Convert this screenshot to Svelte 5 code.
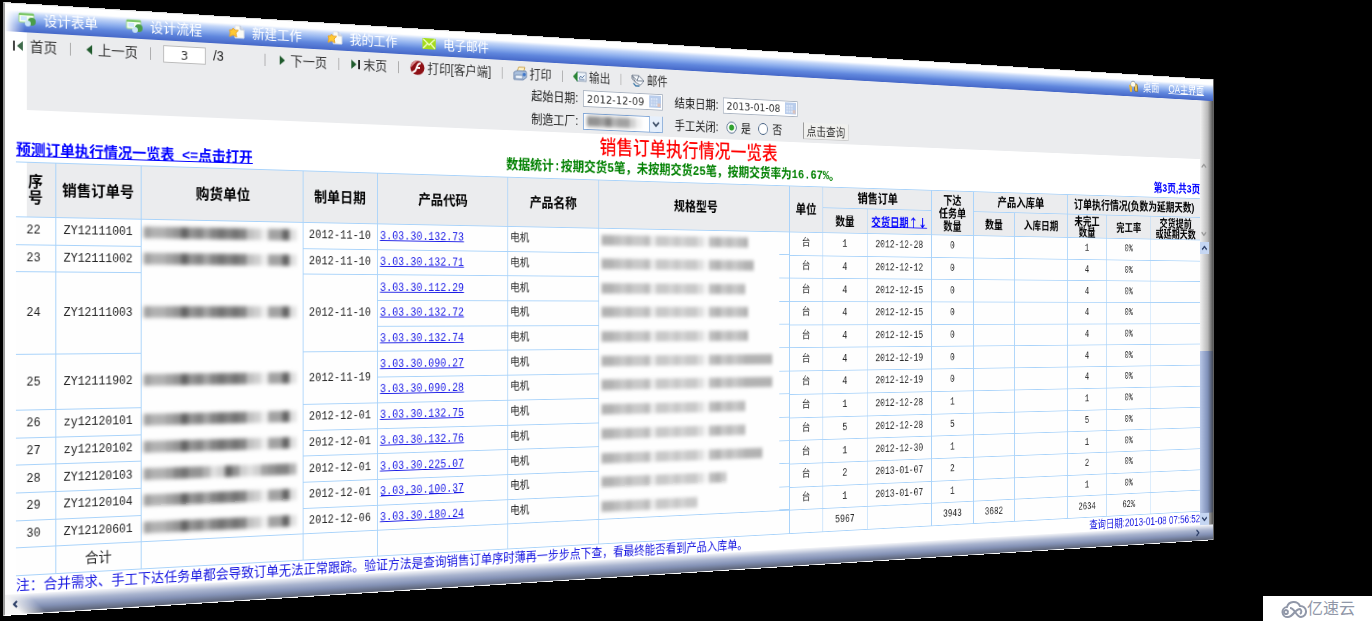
<script lang="ts">
  type Line = { code: string; spec: number; qty: number; due: string; issued: number };
  type Order = { seq: number; no: string; date: string; lines: Line[] };

  const menu = [
    { label: '设计表单', icon: 'form' },
    { label: '设计流程', icon: 'form' },
    { label: '新建工作', icon: 'work' },
    { label: '我的工作', icon: 'work' },
    { label: '电子邮件', icon: 'mail' },
  ];

  const orders: Order[] = [
    { seq: 22, no: 'ZY12111001', date: '2012-11-10', lines: [
      { code: '3.03.30.132.73', spec: 198, qty: 1, due: '2012-12-28', issued: 0 },
    ] },
    { seq: 23, no: 'ZY12111002', date: '2012-11-10', lines: [
      { code: '3.03.30.132.71', spec: 206, qty: 4, due: '2012-12-12', issued: 0 },
    ] },
    { seq: 24, no: 'ZY12111003', date: '2012-11-10', lines: [
      { code: '3.03.30.112.29', spec: 194, qty: 4, due: '2012-12-15', issued: 0 },
      { code: '3.03.30.132.72', spec: 198, qty: 4, due: '2012-12-15', issued: 0 },
      { code: '3.03.30.132.74', spec: 198, qty: 4, due: '2012-12-15', issued: 0 },
    ] },
    { seq: 25, no: 'ZY12111902', date: '2012-11-19', lines: [
      { code: '3.03.30.090.27', spec: 232, qty: 4, due: '2012-12-19', issued: 0 },
      { code: '3.03.30.090.28', spec: 232, qty: 4, due: '2012-12-19', issued: 0 },
    ] },
    { seq: 26, no: 'zy12120101', date: '2012-12-01', lines: [
      { code: '3.03.30.132.75', spec: 194, qty: 1, due: '2012-12-28', issued: 1 },
    ] },
    { seq: 27, no: 'zy12120102', date: '2012-12-01', lines: [
      { code: '3.03.30.132.76', spec: 194, qty: 5, due: '2012-12-28', issued: 5 },
    ] },
    { seq: 28, no: 'ZY12120103', date: '2012-12-01', lines: [
      { code: '3.03.30.225.07', spec: 218, qty: 1, due: '2012-12-30', issued: 1 },
    ] },
    { seq: 29, no: 'ZY12120104', date: '2012-12-01', lines: [
      { code: '3.03.30.100.37', spec: 168, qty: 2, due: '2013-01-07', issued: 2 },
    ] },
    { seq: 30, no: 'ZY12120601', date: '2012-12-06', lines: [
      { code: '3.03.30.180.24', spec: 128, qty: 1, due: '2013-01-07', issued: 1 },
    ] },
  ];

  // ink density of the hidden texts, one number per 8px
  const buyerInk = [6, 5, 5, 6, 7, 10, 7, 8, 6, 8, 9, 8, 9, 8, 4, 3, 1, 6, 6, 10, 2];
  const buyerInkAlt = [6, 5, 5, 6, 8, 9, 7, 7, 5, 2, 3, 10, 7, 3, 2, 3, 6, 7, 8, 8, 5];
  const specInk = [7, 7, 6, 5, 6, 5, 5, 6, 2, 5, 5, 4, 5, 4, 5, 5, 3, 1, 6, 7, 5, 6, 5, 6, 7, 7, 7, 7, 7];

  let page = $state('3');
  let from = $state('2012-12-09');
  let to = $state('2013-01-08');
  let closed = $state('yes');
</script>

{#snippet ink(values: number[], width: number)}
  <svg class="ink" {width} height="14" aria-hidden="true">
    {#each values as v, i}
      <rect x={i * 8} y="0" width="8" height="12" fill="#555" opacity={v / 11} />
    {/each}
  </svg>
{/snippet}

{#snippet calendar()}
  <svg class="cal" width="16" height="14" viewBox="0 0 16 14" aria-hidden="true">
    <rect width="16" height="14" fill="#b9cdec" />
    <rect x="2" y="3" width="9" height="9" fill="#dbe6f7" />
    <path d="M2 6h9M2 9h9M5 3v9M8 3v9" stroke="#b3c7e8" />
    <rect x="11" y="9" width="4" height="4" fill="#dcc3bd" />
  </svg>
{/snippet}

{#snippet menuIcon(kind: string)}
  <svg width="18" height="16" viewBox="0 0 18 16" aria-hidden="true">
    {#if kind === 'form'}
      <rect x="1" y="2" width="15" height="9" rx="1" fill="#f4fff0" stroke="#9bd68a" />
      <path d="M1 3h15" stroke="#7cc768" stroke-width="2" />
      <rect x="3" y="5" width="6" height="4" fill="#cfe6ff" />
      <circle cx="14" cy="10" r="4" fill="#4a9e49" />
      <circle cx="10" cy="12" r="3" fill="#c9e4f7" />
    {:else if kind === 'work'}
      <path d="M7 1h6l4 4v9H7z" fill="#fbfbf4" stroke="#d8deea" />
      <path d="M13 1v4h4" fill="#d4dcea" stroke="#b3bfd4" />
      <path d="M5 4l2 2 4 0-3 3 1 4-4-2-4 2 1-4-1-3 3 0z" fill="#ffc933" stroke="#e9a62c" />
    {:else if kind === 'mail'}
      <rect x="1" y="2" width="16" height="12" rx="1" fill="#a6dc1e" />
      <path d="M2 3l7 6 7-6M2 13l5-5M16 13l-5-5" stroke="#f3ffd0" stroke-width="1.5" fill="none" />
    {:else}
      <path d="M2 6h5v9H4z" fill="#e7b73e" />
      <path d="M11 4l5 1 1 9h-5z" fill="#f1c95a" stroke="#8a6a21" />
      <circle cx="9" cy="5" r="4" fill="#fffbe8" stroke="#8d99ae" />
    {/if}
  </svg>
{/snippet}

<main>
  <div class="window">
    <header class="bar">
      <nav>
        {#each menu as m}
          <a href="#menu">{@render menuIcon(m.icon)}<span>{m.label}</span></a>
        {/each}
      </nav>
      <nav class="right">
        <a href="#desk">{@render menuIcon('desk')}<span>桌面</span></a>
        <a class="home" href="#home">OA主界面</a>
      </nav>
    </header>

    <div class="body">
      <div class="content">
        <section class="tools">
          <div class="toolbar">
            <button>
              <svg width="12" height="12" viewBox="0 0 12 12"><path d="M1 1h2v10H1z" fill="#444" /><path d="M11 1v10L5 6z" fill="#3f6b4b" /></svg>
              首页
            </button>
            <i class="sep"></i>
            <button>
              <svg width="12" height="12" viewBox="0 0 12 12"><path d="M9 1v10L3 6z" fill="#1f5a2c" /></svg>
              上一页
            </button>
            <i class="sep"></i>
            <span class="pager">
              <input class="page" aria-label="页码" bind:value={page} />
              <span>/3</span>
            </span>
            <i class="sep"></i>
            <button>
              <svg width="12" height="12" viewBox="0 0 12 12"><path d="M3 1v10l6-5z" fill="#1f5a2c" /></svg>
              下一页
            </button>
            <i class="sep"></i>
            <button>
              <svg width="12" height="12" viewBox="0 0 12 12"><path d="M1 1v10l6-5z" fill="#1f5a2c" /><path d="M9 1h2v10H9z" fill="#222" /></svg>
              末页
            </button>
            <i class="sep"></i>
            <button>
              <svg width="18" height="16" viewBox="0 0 18 16">
                <ellipse cx="9" cy="8" rx="8.5" ry="7.8" fill="#8e1016" />
                <path d="M1 6a8.5 7.8 0 0 1 9-6C6 3 4 5 1 8z" fill="#d98a8d" />
                <path d="M13 3c-4 0-4 3-5 5s-1 5-5 5M7 8h5" stroke="#fff" stroke-width="2" fill="none" />
              </svg>
              打印[客户端]
            </button>
            <i class="sep"></i>
            <button>
              <svg width="18" height="16" viewBox="0 0 18 16">
                <path d="M5 6l2-5h8l-2 6z" fill="#fff3c9" stroke="#c9a14a" />
                <path d="M1 7l4-2h11l1 2v5l-4 3H1z" fill="#a9bfdc" stroke="#6e86ad" />
                <path d="M3 10h9v4H3z" fill="#eef4fb" stroke="#7f95b8" />
                <circle cx="14" cy="9" r="2" fill="#3f78c9" />
              </svg>
              打印
            </button>
            <i class="sep"></i>
            <button>
              <svg width="18" height="14" viewBox="0 0 18 14">
                <rect x="5" y="2" width="12" height="10" fill="#eef4fa" stroke="#8b9bb3" />
                <path d="M6 1v12L0 7z" fill="#2a8436" />
                <path d="M8 9l2-3 2 2 3-3M8 10h7" stroke="#50719f" fill="none" />
              </svg>
              输出
            </button>
            <i class="sep"></i>
            <button>
              <svg width="18" height="16" viewBox="0 0 18 16">
                <path d="M1 3l9 0 7 6-5 5-6-3z" fill="#f6f9fc" stroke="#6a7688" />
                <path d="M1 3l7 6 2-6M8 9l9 0M1 3v4l5 4" stroke="#6a7688" fill="none" />
                <path d="M3 12l3 3 5 0" stroke="#3d78a8" stroke-width="1.5" fill="none" />
              </svg>
              邮件
            </button>
          </div>

          <form class="query" onsubmit={(e) => e.preventDefault()}>
            <label for="from">起始日期:</label>
            <span class="field"><input id="from" bind:value={from} />{@render calendar()}</span>
            <label for="to">结束日期:</label>
            <span class="field"><input id="to" bind:value={to} />{@render calendar()}</span>
            <span></span>
            <label for="plant">制造工厂:</label>
            <span class="field pick">
              <select id="plant"><option></option></select>
              <span class="hidden-name">{@render ink([7, 7, 6, 8, 5, 6, 6, 3, 1], 72)}</span>
              <svg class="drop" width="17" height="18" viewBox="0 0 17 18" aria-hidden="true">
                <rect width="17" height="18" fill="#e6effb" />
                <path d="M.5 0v18" stroke="#8fb2dd" />
                <path d="M5 7l4 4 4-4" stroke="#3c4d66" stroke-width="2" fill="none" />
              </svg>
            </span>
            <span>手工关闭:</span>
            <span class="radios">
              <label><input type="radio" name="closed" value="yes" bind:group={closed} />是</label>
              <label><input type="radio" name="closed" value="no" bind:group={closed} />否</label>
            </span>
            <button class="go">点击查询</button>
          </form>
        </section>

        <section class="report">
          <h1>销售订单执行情况一览表</h1>
          <div class="summary">
            <a href="#forecast">预测订单执行情况一览表&nbsp; &lt;=点击打开</a>
            <p>数据统计:按期交货5笔，未按期交货25笔，按期交货率为16.67%。</p>
            <span>第3页,共3页</span>
          </div>

          <table>
            <colgroup>
              <col class="w-seq" /><col class="w-no" /><col class="w-buyer" /><col class="w-date" />
              <col class="w-code" /><col class="w-name" /><col /><col class="w-unit" />
              <col class="w-m" /><col class="w-due" /><col class="w-m" /><col class="w-m" />
              <col class="w-date" /><col class="w-m" /><col class="w-rate" /><col class="w-date" />
            </colgroup>
            <thead>
              <tr>
                <th rowspan="2" class="seq">序<br />号</th>
                <th rowspan="2">销售订单号</th>
                <th rowspan="2">购货单位</th>
                <th rowspan="2">制单日期</th>
                <th rowspan="2">产品代码</th>
                <th rowspan="2">产品名称</th>
                <th rowspan="2">规格型号</th>
                <th rowspan="2">单位</th>
                <th colspan="2">销售订单</th>
                <th rowspan="2" class="issued">下达<br />任务单<br />数量</th>
                <th colspan="2">产品入库单</th>
                <th colspan="3" class="state">订单执行情况(负数为延期天数)</th>
              </tr>
              <tr class="sub">
                <th>数量</th>
                <th><a href="#sort">交货日期↑↓</a></th>
                <th>数量</th>
                <th>入库日期</th>
                <th>未完工<br />数量</th>
                <th>完工率</th>
                <th>交货提前<br />或延期天数</th>
              </tr>
            </thead>
            <tbody>
              {#each orders as o}
                {#each o.lines as l, i}
                  <tr>
                    {#if i === 0}
                      <td rowspan={o.lines.length} class="no">{o.seq}</td>
                      <td rowspan={o.lines.length}>{o.no}</td>
                      <td rowspan={o.lines.length} class="buyer">{@render ink(o.seq === 28 ? buyerInkAlt : buyerInk, 168)}</td>
                      <td rowspan={o.lines.length}>{o.date}</td>
                    {/if}
                    <td class="left"><a href="#product">{l.code}</a></td>
                    <td class="left">电机</td>
                    <td class="spec">{@render ink(specInk, l.spec)}</td>
                    <td>台</td>
                    <td>{l.qty}</td>
                    <td>{l.due}</td>
                    <td>{l.issued}</td>
                    <td></td>
                    <td></td>
                    <td>{l.qty}</td>
                    <td>0%</td>
                    <td></td>
                  </tr>
                {/each}
              {/each}
              <tr class="total">
                <td></td>
                <td>合计</td>
                <td></td>
                <td></td>
                <td></td>
                <td></td>
                <td></td>
                <td></td>
                <td>5967</td>
                <td></td>
                <td>3943</td>
                <td>3682</td>
                <td></td>
                <td>2634</td>
                <td>62%</td>
                <td></td>
              </tr>
            </tbody>
          </table>

          <footer>
            <p>注：合并需求、手工下达任务单都会导致订单无法正常跟踪。验证方法是查询销售订单序时薄再一步步点下查，看最终能否看到产品入库单。</p>
            <span>查询日期:2013-01-08 07:56:52</span>
          </footer>
        </section>
      </div>

      <div class="scroll" aria-hidden="true">
        <div class="upper">
          <svg width="14" height="14" viewBox="0 0 14 14"><path d="M3 9l4-4 4 4" /></svg>
          <svg width="14" height="14" viewBox="0 0 14 14"><path d="M3 5l4 4 4-4" /></svg>
        </div>
        <div class="lower">
          <svg width="16" height="16" viewBox="0 0 16 16"><path d="M4 10l4-4 4 4" /></svg>
          <div class="thumb"></div>
          <svg width="16" height="16" viewBox="0 0 16 16"><path d="M4 6l4 4 4-4" /></svg>
        </div>
      </div>
    </div>

    <div class="edge" aria-hidden="true">
      <svg width="14" height="14" viewBox="0 0 14 14"><path d="M8 4L5 7l3 3" /></svg>
      <svg width="14" height="14" viewBox="0 0 14 14"><path d="M5 3l4 4-4 4" /></svg>
    </div>
  </div>

  <div class="mark">
    <svg width="26" height="20" viewBox="0 0 26 20" fill="none" stroke="#9097a8" stroke-width="2" aria-hidden="true">
      <path d="M7 18a5 5 0 0 1-1-10 7 7 0 0 1 13-1 5.5 5.5 0 0 1 1 11c-5 0-6-9-11-9" />
      <path d="M7 18c5 0 7-8 12-8a3 3 0 0 1 0 5M7 13a2 2 0 1 0 0 .1" />
    </svg>
    <span>亿速云</span>
  </div>
</main>

<style>
  :global(body) {
    background: #000;
  }
  main {
    position: relative;
    min-height: 100vh;
    box-sizing: border-box;
    padding: 2px 0 0 3px;
    overflow: hidden;
    font-family: "Liberation Sans", "Noto Sans CJK SC", sans-serif;
    font-size: 14px;
    line-height: 16px;
    color: #222;
  }
  /* the window stands turned away from the viewer, its left side nearest */
  .window {
    width: 117.8vw;
    box-sizing: border-box;
    background: #fff;
    border: 1px solid #ddd;
    border-left: 2px solid #999;
    border-bottom-color: #fff;
    transform-origin: 0 310px;
    transform: perspective(22vw) rotateY(3.56deg);
  }
  a {
    color: #1a1ae6;
  }
  svg {
    flex-shrink: 0;
  }

  .bar {
    display: flex;
    justify-content: space-between;
    height: 28px;
    padding: 2px 16px 0 13px;
    box-sizing: border-box;
    background:
      linear-gradient(90deg, #fff, rgba(255, 255, 255, 0) 20px),
      linear-gradient(#fff 22%, #c3d6f8 36%, #8fb0ee 55%, #5f86dd 75%, #4668c8);
  }
  .bar nav {
    display: flex;
    gap: 29px;
  }
  .bar .right {
    gap: 16px;
  }
  .bar a {
    display: flex;
    align-items: center;
    gap: 8px;
    color: #fff;
    text-decoration: none;
  }
  .bar .home {
    text-decoration: underline;
  }

  .body {
    display: flex;
  }
  .content {
    flex: 1;
    min-width: 0;
  }
  .tools {
    height: 78px;
    background: linear-gradient(90deg, #fff 22px, #ebecee 22px);
  }
  .toolbar {
    display: flex;
    align-items: center;
    gap: 13px;
    height: 28px;
    padding-left: 7px;
  }
  .toolbar button {
    display: flex;
    align-items: center;
    gap: 3px;
    padding: 0;
    border: none;
    background: none;
    font: inherit;
    color: #333;
    cursor: pointer;
  }
  .toolbar > button:first-child {
    gap: 6px;
  }
  .sep {
    width: 1px;
    height: 13px;
    background: #aaa;
  }
  .pager {
    display: flex;
    gap: 8px;
    width: 98px;
  }
  .page {
    width: 46px;
    height: 18px;
    box-sizing: border-box;
    border: 1px solid #bbb;
    padding: 0;
    text-align: center;
    font: 13px "DejaVu Sans", sans-serif;
    color: #333;
  }

  .query {
    display: grid;
    grid-template-columns: 66px 105px 82px 105px 74px;
    grid-auto-rows: 20px;
    row-gap: 6px;
    align-items: center;
    padding-left: 592px;
    white-space: nowrap;
  }
  .query > :nth-child(5n + 3) {
    padding-left: 16px;
  }
  .field {
    position: relative;
    display: flex;
    align-items: center;
    height: 19px;
    box-sizing: border-box;
    border: 1px solid #aab4c2;
    background: #fff;
  }
  .field input,
  .field select {
    flex: 1;
    min-width: 0;
    height: 100%;
    padding: 0 0 0 4px;
    border: none;
    background: none;
    font: 13px "DejaVu Sans", sans-serif;
    color: #333;
    appearance: none;
  }
  .cal {
    margin-right: 1px;
  }
  .pick {
    border-color: #7fa6d8;
  }
  .hidden-name {
    position: absolute;
    left: 4px;
    top: 2px;
    pointer-events: none;
  }
  .radios {
    display: flex;
    gap: 10px;
    padding-left: 5px;
  }
  .radios label {
    display: flex;
    align-items: center;
    gap: 6px;
  }
  .radios input {
    appearance: none;
    width: 14px;
    height: 14px;
    margin: 0;
    border: 1px solid #3d5a7e;
    border-radius: 50%;
    background: #fff;
  }
  .radios input:checked {
    background: radial-gradient(#2fa12f 3px, #fff 4px);
  }
  .go {
    width: 66px;
    height: 20px;
    margin-left: 8px;
    padding: 0;
    border: 1px solid #ccc;
    border-width: 0 1px 1px;
    border-left-color: #999;
    background: #f0f0ee;
    font: inherit;
    color: #333;
  }

  .report {
    padding-left: 11px;
  }
  h1 {
    margin: 0;
    padding-top: 2px;
    text-align: center;
    font-size: 22px;
    line-height: 26px;
    font-weight: 500;
    color: #f00;
  }
  .summary {
    display: grid;
    grid-template-columns: 1fr auto 1fr;
    align-items: center;
    height: 24px;
    font-size: 15px;
    font-weight: bold;
    white-space: nowrap;
  }
  .summary a {
    color: #00f;
  }
  .summary p {
    margin: 0;
    padding-right: 30px;
    font-family: "Liberation Mono", "Noto Sans CJK SC", monospace;
    color: #008000;
  }
  .summary span {
    justify-self: end;
    color: #00f;
  }

  table {
    width: 100%;
    height: 416px;
    table-layout: fixed;
    border-collapse: collapse;
    border-top: 1px solid #a9d3fa;
    border-bottom: 1px solid #a9d3fa;
    background: #fefefe;
  }
  .w-seq { width: 40px; }
  .w-no { width: 89px; }
  .w-buyer { width: 178px; }
  .w-date { width: 86px; }
  .w-code { width: 158px; }
  .w-name { width: 116px; }
  .w-unit { width: 48px; }
  .w-m { width: 65px; }
  .w-rate { width: 75px; }
  .w-due { width: 97px; }
  th {
    height: 24px;
    padding: 0;
    border: 1px solid #a9d3fa;
    background: #ebecee;
    font-size: 15px;
    line-height: 16px;
    color: #000;
    white-space: nowrap;
  }
  th.issued {
    font-size: 14px;
  }
  .sub th {
    height: 29px;
    font-size: 14px;
    line-height: 14px;
  }
  th a {
    font-family: "Noto Sans CJK SC", sans-serif;
    color: #00f;
  }
  .seq {
    background: linear-gradient(90deg, #fff 11px, #ebecee 11px);
  }
  th.state,
  .sub th:last-child,
  td:last-child {
    border-right: none;
  }
  .seq,
  .no,
  .total td:first-child {
    border-left: none;
  }
  tbody tr {
    height: 27px;
  }
  td {
    padding: 0;
    border: 1px solid #a9d3fa;
    text-align: center;
    font-family: "Liberation Mono", "Noto Sans CJK SC", monospace;
    font-size: 12px;
    line-height: 16px;
    color: #222;
    white-space: nowrap;
  }
  .no {
    padding-right: 4px;
  }
  .left {
    padding-left: 3px;
    text-align: left;
  }
  .buyer,
  .spec {
    border-top: none;
    border-bottom: none;
    text-align: left;
  }
  .buyer {
    padding-left: 2px;
  }
  .spec {
    padding-left: 3px;
    background: linear-gradient(#a9d3fa, #a9d3fa) right bottom / 14px 1px no-repeat;
  }
  .total td {
    border-top: 1px solid #a9d3fa;
  }
  .total td:nth-child(2) {
    font-size: 14px;
  }
  .ink {
    display: block;
    filter: blur(2px);
  }
  .spec .ink {
    opacity: 0.7;
  }

  footer {
    display: flex;
    justify-content: space-between;
    align-items: center;
    height: 18px;
    color: #1414e0;
    white-space: nowrap;
  }
  footer p {
    margin: 0;
  }

  .scroll {
    display: flex;
    flex-direction: column;
    width: 23px;
    background: linear-gradient(90deg, #f2f2f2, #b8b8b8 60%, #555);
  }
  .scroll svg,
  .edge svg {
    fill: none;
    stroke: #667;
    stroke-width: 2;
  }
  .upper {
    display: flex;
    flex-direction: column;
    justify-content: space-between;
    height: 104px;
    padding-top: 80px;
  }
  .upper svg {
    stroke: #999;
  }
  .lower {
    display: flex;
    flex: 1;
    flex-direction: column;
    padding-top: 4px;
  }
  .lower svg {
    background: #c5d6f2;
    stroke: #2c3e66;
  }
  .thumb {
    height: 215px;
    margin-top: auto;
    background: linear-gradient(90deg, #b9c8e8, #7f90b8 60%, #444a58);
  }

  .edge {
    display: flex;
    justify-content: space-between;
    align-items: center;
    height: 20px;
    padding: 0 20px 0 4px;
    background:
      linear-gradient(45deg, #f4f4f4 12px, rgba(255, 255, 255, 0) 30px),
      linear-gradient(#f4f5f8, #a9b4cf 35%, #8391b5 65%, #5b6274);
  }
  .edge svg {
    stroke: #2c3e66;
  }

  .mark {
    position: absolute;
    right: 0;
    bottom: 0;
    display: flex;
    align-items: center;
    height: 25px;
    padding: 0 17px 0 18px;
    background: #fff;
    font-size: 16px;
    color: #9097a8;
  }
</style>
